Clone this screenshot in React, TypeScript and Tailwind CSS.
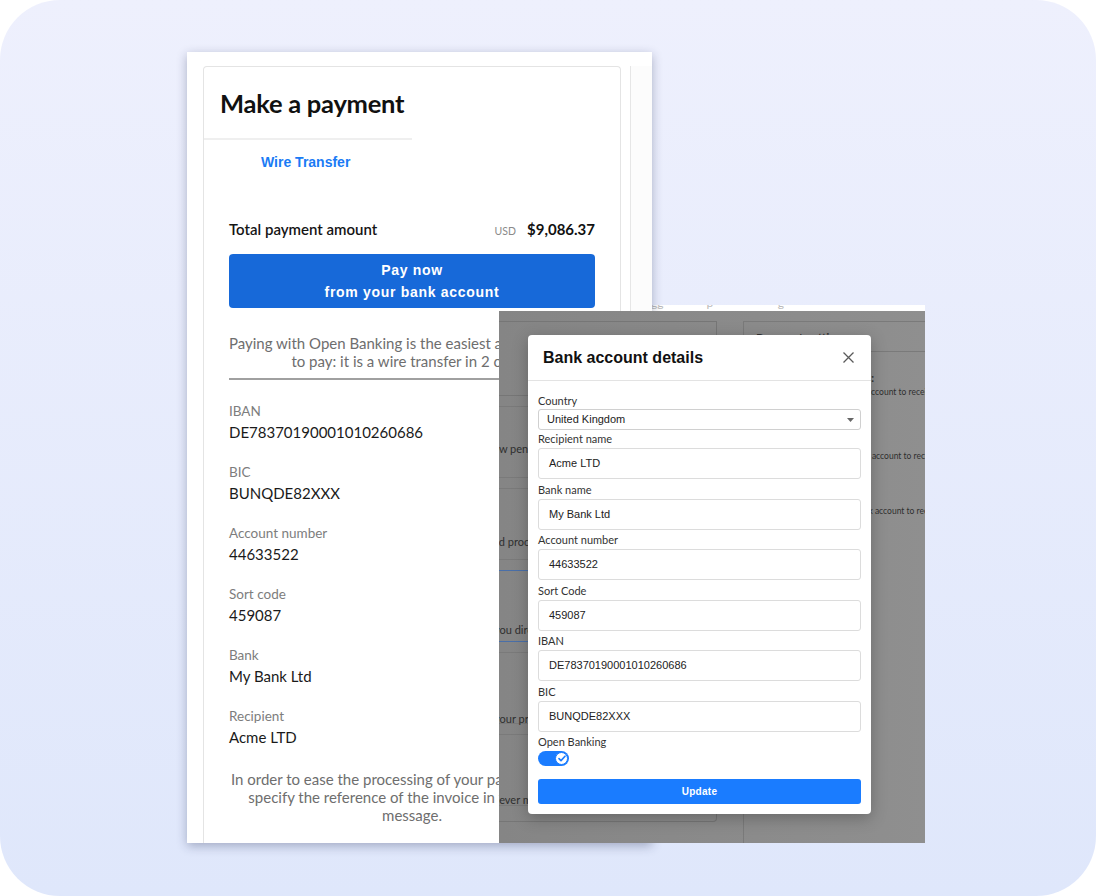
import React from "react";

const details: [string, string][] = [
  ["IBAN", "DE78370190001010260686"],
  ["BIC", "BUNQDE82XXX"],
  ["Account number", "44633522"],
  ["Sort code", "459087"],
  ["Bank", "My Bank Ltd"],
  ["Recipient", "Acme LTD"],
];

const formFields: [string, string][] = [
  ["Recipient name", "Acme LTD"],
  ["Bank name", "My Bank Ltd"],
  ["Account number", "44633522"],
  ["Sort Code", "459087"],
  ["IBAN", "DE78370190001010260686"],
  ["BIC", "BUNQDE82XXX"],
];

export default function App() {
  return (
    <div className="h-[896px] w-[1096px] bg-white">
      <div className="relative h-full w-full overflow-hidden rounded-[60px] bg-linear-to-b from-[#eef0fd] to-[#dfe7fb]">
        <div className="absolute left-[499px] top-[305px] h-[6px] w-[426px] overflow-hidden bg-white">
          <div className="-mt-[9px] whitespace-nowrap pl-[152px] font-['Lato',sans-serif] text-[12px] leading-[14px] text-[#bbb]">gg&nbsp;&nbsp;&nbsp;&nbsp;&nbsp;&nbsp;&nbsp;&nbsp;&nbsp;&nbsp;&nbsp;&nbsp;&nbsp;&nbsp;p&nbsp;&nbsp;&nbsp;&nbsp;&nbsp;&nbsp;&nbsp;&nbsp;&nbsp;&nbsp;&nbsp;&nbsp;&nbsp;&nbsp;&nbsp;&nbsp;&nbsp;&nbsp;&nbsp;&nbsp;&nbsp;g</div>
        </div>
        <PaymentWindow />
        <AdminWindow />
      </div>
    </div>
  );
}

function PaymentWindow() {
  return (
    <div className="absolute left-[187px] top-[52px] flex h-[791px] w-[465px] bg-white pl-4 pt-[14px] font-['Lato',sans-serif] shadow-[0_3px_10px_rgba(30,40,80,0.32)]">
      <div className="h-full w-[418px] shrink-0 rounded-t-[4px] border border-b-0 border-[#e4e4e4]">
        <h1 className="px-4 pb-[19px] pt-5 text-[25.5px] font-bold leading-8 tracking-[-0.01em] text-[#111]">Make a payment</h1>
        <div className="h-[2px] w-[208px] bg-[#efefef]" />
        <div className="mt-[13px] pl-[57px] font-['Liberation_Sans',Arial,sans-serif] text-[14px] font-bold leading-[18px] text-[#1a7bf5]">Wire Transfer</div>
        <div className="mx-[25px] mt-[48px]">
          <div className="flex h-5 items-baseline justify-between leading-5">
            <span className="text-[15px] font-semibold text-[#151515]">Total payment amount</span>
            <span className="flex items-baseline">
              <span className="mr-[11px] text-[10.5px] text-[#8a8a8a]">USD</span>
              <span className="text-[15px] font-bold text-[#111]">$9,086.37</span>
            </span>
          </div>
          <button className="mt-[15px] block h-[54px] w-full rounded-[4px] bg-[#1769d9] py-[5px] text-center font-['Liberation_Sans',Arial,sans-serif] text-[14px] font-bold leading-[22px] tracking-[0.05em] text-white">
            Pay now
            <br />
            from your bank account
          </button>
          <p className="mt-[26px] whitespace-nowrap text-center text-[15px] leading-[18px] text-[#6e6e6e]">
            Paying with Open Banking is the easiest and fastest way
            <br />
            to pay: it is a wire transfer in 2 clicks.
          </p>
          <div className="mt-2 h-[2px] bg-[#a0a0a0]" />
          <div className="mt-[22px] flex flex-col gap-[21px]">
            {details.map(([label, value]) => (
              <div key={label}>
                <div className="text-[13.5px] leading-[18px] text-[#7d7d7d]">{label}</div>
                <div className="mt-[2px] text-[15px] leading-5 text-[#1a1a1a]">{value}</div>
              </div>
            ))}
          </div>
          <p className="mt-[23px] whitespace-nowrap text-center text-[15px] leading-[18px] text-[#6e6e6e]">
            In order to ease the processing of your payment, please
            <br />
            specify the reference of the invoice in the transfer
            <br />
            message.
          </p>
        </div>
      </div>
      <div className="ml-[9px] h-full w-[22px] border-l border-[#e6e6e6] bg-[#fcfcfc]" />
    </div>
  );
}

function AdminWindow() {
  const rows = [
    { pt: "pt-[35px]", text: "new pending", ml: "-ml-[12px]" },
    { pt: "pt-[46px]", text: "ed processing", ml: "-ml-[6px]" },
    { pt: "pt-[52px]", text: "you directly", ml: "-ml-[5px]", blue: true },
    { pt: "pt-[59px]", text: "your products", ml: "-ml-[5px]" },
    { pt: "pt-[58px]", text: "never miss", ml: "-ml-[6px]" },
  ];
  return (
    <div className="absolute left-[499px] top-[311px] h-[532px] w-[426px] overflow-hidden bg-linear-to-r from-[#858585] to-[#8f8f8f] font-['Lato',sans-serif] text-[#2f2f2f]">
      <div className="flex h-full pt-[10px]">
        <div className="h-[501px] w-[218px] shrink-0 overflow-hidden rounded-br-[4px] border border-l-0 border-[#767676]">
          <div className="h-[74px] border-b border-[#767676]" />
          {rows.map((r) => (
            <div key={r.text} className={`mt-[10px] h-[72px] border-y ${r.blue ? "border-[#4a6fa8]" : "border-[#7a7a7a]"} ${r.pt}`}>
              <div className={`whitespace-nowrap text-[11px] leading-[14px] ${r.ml}`}>{r.text}</div>
            </div>
          ))}
        </div>
        <div className="ml-[26px] min-w-0 flex-1 border-l border-t border-[#7a7a7a]">
          <div className="h-[30px] border-b border-[#7a7a7a] pl-3 pt-[9px] text-[12px] font-bold leading-[14px] text-[#333]">Payment settings</div>
          <div className="whitespace-nowrap pt-[19px]">
            <div className="w-[130px] text-right text-[11px] font-bold leading-[14px]">Bank transfer details:</div>
            <div className="pl-[102px] text-[8.5px] leading-[14px]">Bank account to receive payments</div>
            <div className="mt-[50px] pl-[107px] text-[8.5px] leading-[14px]">Bank account to receive payments</div>
            <div className="mt-[41px] pl-[110px] text-[8.5px] leading-[14px]">Bank account to receive payments</div>
          </div>
        </div>
      </div>
      <BankModal />
    </div>
  );
}

function BankModal() {
  return (
    <div className="absolute left-[29px] top-[24px] w-[343px] rounded-[4px] bg-white shadow-[0_4px_16px_rgba(0,0,0,0.25)]">
      <div className="flex h-[46px] items-center justify-between border-b border-[#e3e3e3] pl-[15px] pr-[17px]">
        <span className="font-['Liberation_Sans',Arial,sans-serif] text-[16px] font-bold text-[#111]">Bank account details</span>
        <svg width="11" height="11" viewBox="0 0 11 11" fill="none" stroke="#5a5a5a" strokeWidth="1.3">
          <path d="M0.5 0.5l10 10M10.5 0.5l-10 10" />
        </svg>
      </div>
      <div className="px-[10px] pb-[10px] pt-[13px]">
        <div className="font-['Lato',sans-serif] text-[11px] leading-[14px] text-[#333]">Country</div>
        <div className="mt-px flex h-[21px] items-center justify-between rounded-[3px] border border-[#d0d0d0] pl-2 pr-[6px] font-['Liberation_Sans',Arial,sans-serif] text-[11px] text-[#222]">
          <span>United Kingdom</span>
          <svg width="7" height="4" viewBox="0 0 7 4">
            <path d="M0 0h7L3.5 4z" fill="#666" />
          </svg>
        </div>
        {formFields.map(([label, value], i) => (
          <div key={label} className={i === 0 ? "mt-[2px]" : "mt-[3.5px]"}>
            <div className="font-['Lato',sans-serif] text-[11px] leading-[14px] text-[#333]">{label}</div>
            <div className="mt-[2px] flex h-[31px] items-center rounded-[3px] border border-[#dcdcdc] pl-[10px] font-['Liberation_Sans',Arial,sans-serif] text-[11px] text-[#222]">{value}</div>
          </div>
        ))}
        <div className="mt-[3.5px] font-['Lato',sans-serif] text-[11px] leading-[14px] text-[#333]">Open Banking</div>
        <div className="mt-[2px] flex h-[15px] w-[31px] items-center justify-end rounded-full bg-[#1a7cff] pr-px">
          <div className="flex h-[13px] w-[13px] items-center justify-center rounded-full border border-[#1a7cff] bg-white">
            <svg width="8" height="7" viewBox="0 0 8 7" fill="none" stroke="#1a7cff" strokeWidth="1.6" strokeLinecap="round" strokeLinejoin="round">
              <path d="M1 3.6l2 2L7 1.2" />
            </svg>
          </div>
        </div>
        <button className="mt-[13px] block h-[25px] w-full rounded-[3px] bg-[#1a7cff] text-center font-['Liberation_Sans',Arial,sans-serif] text-[10px] font-bold tracking-[0.03em] text-white">Update</button>
      </div>
    </div>
  );
}
